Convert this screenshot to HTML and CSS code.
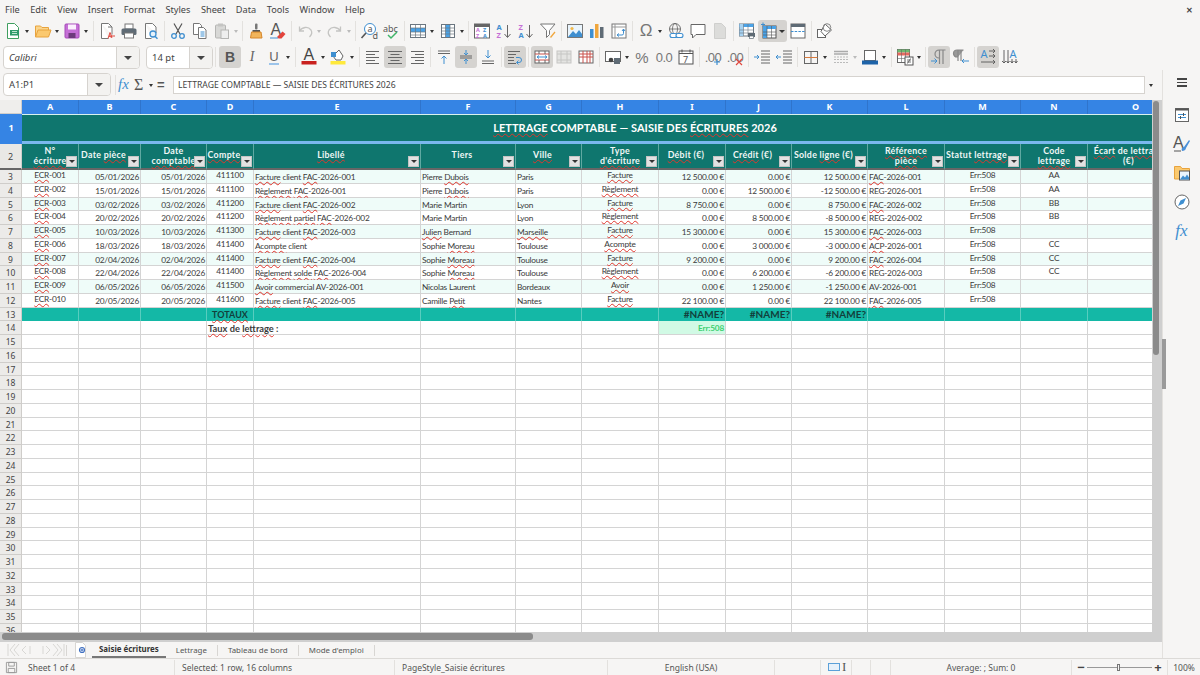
FILE: index.html
```html
<!DOCTYPE html>
<html lang="fr">
<head>
<meta charset="utf-8">
<title>Lettrage comptable</title>
<link rel="stylesheet" href="styles.css">
</head>
<body>
<nav class="menu">
<span>File</span><span>Edit</span><span>View</span><span>Insert</span><span>Format</span><span>Styles</span><span>Sheet</span><span>Data</span><span>Tools</span><span>Window</span><span>Help</span>
<span class="close">✕</span>
</nav>

<div class="tb tb1">
<div class="ic"><svg viewBox="0 0 18 18"><path d="M3.500 1.500h7l4 4v11h-11z" fill="#fff" stroke="#3f9f5f"/><rect x="6" y="8" width="9" height="5.500" fill="#2f9a6a"/><path d="M8 9.500h5M8 11.500h5" stroke="#bfe6d0"/></svg></div><div class="ar"></div>
<div class="ic"><svg viewBox="0 0 18 18"><path d="M1.500 15V4h5l1.500 1.500h6.500V8" fill="#fbd58c" stroke="#e8a33d"/><path d="M1.500 15l2.500-7h13l-2.500 7z" fill="#fbc96f" stroke="#e8a33d"/></svg></div><div class="ar"></div>
<div class="ic"><svg viewBox="0 0 18 18"><rect x="2" y="2" width="14" height="14" rx="1" fill="#c56fd6" stroke="#a64bb8"/><rect x="5" y="2.500" width="8" height="5" fill="#fbeffd"/><rect x="5.500" y="11" width="7" height="5" fill="#6e3a7c"/></svg></div><div class="ar"></div>
<div class="sep"></div>
<div class="ic"><svg viewBox="0 0 18 18"><path d="M3.500 1.500h7l3.500 3.500v7.500M3.500 1.500v15h7" fill="#fff" stroke="#777"/><path d="M10 5h4" stroke="#777"/><path d="M10 16.500l2-6 2 5-3-1.500h6" fill="none" stroke="#e0483e"/></svg></div>
<div class="ic"><svg viewBox="0 0 18 18"><rect x="5" y="2" width="8" height="5" fill="#fff" stroke="#777"/><rect x="1.500" y="6.500" width="15" height="6.500" rx="1.500" fill="#5f6b75"/><rect x="4.500" y="11" width="9" height="5" fill="#fff" stroke="#777"/></svg></div>
<div class="ic"><svg viewBox="0 0 18 18"><path d="M3.500 1.500h7l3.500 3.500v6M3.500 1.500v15h6" fill="#fff" stroke="#777"/><circle cx="11" cy="12" r="3" fill="#e6f2fb" stroke="#3f8fd0" stroke-width="1.300"/><path d="M13 14.200l2.500 2.500" stroke="#3f8fd0" stroke-width="1.500"/></svg></div>
<div class="sep"></div>
<div class="ic"><svg viewBox="0 0 18 18"><path d="M5 1.500l6 10.500M13 1.500L7 12" stroke="#555" stroke-width="1.200" fill="none"/><circle cx="5" cy="14" r="2.300" fill="none" stroke="#3f8fd0" stroke-width="1.300"/><circle cx="13" cy="14" r="2.300" fill="none" stroke="#3f8fd0" stroke-width="1.300"/></svg></div>
<div class="ic"><svg viewBox="0 0 18 18"><path d="M2.500 1.500h6l2 2v9h-8z" fill="#fff" stroke="#777"/><path d="M7.500 5.500h5l2.500 2.500v8.500h-7.500z" fill="#fff" stroke="#777"/><path d="M9.500 10h4M9.500 12h4M9.500 14h4" stroke="#3f8fd0"/></svg></div>
<div class="ic"><svg viewBox="0 0 18 18"><rect x="2.500" y="3" width="10" height="13" rx="1" fill="#d8d8d6" stroke="#b5b5b3"/><rect x="5" y="1.500" width="5" height="3" fill="#c4c4c2"/><rect x="8" y="8" width="7.500" height="8.500" fill="#eee" stroke="#b5b5b3"/></svg></div><div class="ar dis"></div>
<div class="sep"></div>
<div class="ic"><svg viewBox="0 0 18 18"><rect x="8" y="1.500" width="2.500" height="6" rx="1" fill="#777"/><path d="M5.500 8h7.500v2h-7.500z" fill="#555"/><path d="M4.500 10h9.500l1 6h-11.500z" fill="#f1b45b" stroke="#d6862a"/></svg></div>
<div class="ic"><svg viewBox="0 0 18 18"><text x="1.500" y="12.500" class="svt" fill="#555">A</text><path d="M8 15l5.500-5.500 3 2.500-4 4.500h-3z" fill="#e2443c"/><path d="M1 16h8" stroke="#3f8fd0"/></svg></div>
<div class="sep"></div>
<div class="ic"><svg viewBox="0 0 18 18"><path d="M3.500 4.500v4.500h4.500M3.500 9C6 5 12 4 15 8c1.500 2.500.5 5-1.500 7" fill="none" stroke="#c4c4c2" stroke-width="1.300"/></svg></div><div class="ar dis"></div>
<div class="ic"><svg viewBox="0 0 18 18"><path d="M14.500 4.500v4.500h-4.500M14.500 9C12 5 6 4 3 8c-1.500 2.500-.5 5 1.500 7" fill="none" stroke="#c4c4c2" stroke-width="1.300"/></svg></div><div class="ar dis"></div>
<div class="sep"></div>
<div class="ic"><svg viewBox="0 0 18 18"><circle cx="10" cy="7" r="5.500" fill="#fff" stroke="#3f8fd0"/><text x="7.500" y="9.500" class="svs" fill="#555">a</text><path d="M6 11l-4.500 5" stroke="#555" stroke-width="1.600"/><text x="12.500" y="16.500" class="svs" fill="#555">d</text></svg></div>
<div class="ic"><svg viewBox="0 0 18 18"><text x="1" y="9.500" class="svs" fill="#555">abc</text><path d="M6 13l3 3 6-6" fill="none" stroke="#3fb56a" stroke-width="1.500"/></svg></div>
<div class="sep"></div>
<div class="ic"><svg viewBox="0 0 18 18"><rect x="1.500" y="2.500" width="15" height="13" fill="#fff" stroke="#6b7680"/><rect x="2" y="6" width="14" height="4" fill="#4aa3e8"/><path d="M1.500 6h15M1.500 10h15M1.500 13h15M6.500 2.500v13M11.500 2.500v13" stroke="#6b7680" stroke-width=".7"/></svg></div><div class="ar"></div>
<div class="ic"><svg viewBox="0 0 18 18"><rect x="2.500" y="2.500" width="13" height="13" fill="#fff" stroke="#6b7680"/><rect x="6.500" y="3" width="4.500" height="12" fill="#4aa3e8"/><path d="M2.500 6h13M2.500 9h13M2.500 12h13M6.500 2.500v13M11 2.500v13" stroke="#6b7680" stroke-width=".7"/></svg></div><div class="ar"></div>
<div class="sep"></div>
<div class="ic"><svg viewBox="0 0 18 18"><rect x="1.500" y="2" width="15" height="14" fill="#fff" stroke="#666"/><rect x="1.500" y="2" width="15" height="3" fill="#666"/><text x="3" y="10" class="svxs" fill="#c66fd6">A</text><text x="3" y="15.500" class="svxs" fill="#c66fd6">Z</text><text x="10" y="10" class="svxs" fill="#3f8fd0">Z</text><text x="10" y="15.500" class="svxs" fill="#3f8fd0">A</text></svg></div>
<div class="ic"><svg viewBox="0 0 18 18"><text x="1.500" y="8" class="svx" fill="#3f8fd0">A</text><text x="1.500" y="16" class="svx" fill="#c66fd6">Z</text><path d="M12.500 3v12M9.500 12l3 3.500 3-3.500" fill="none" stroke="#666"/></svg></div>
<div class="ic"><svg viewBox="0 0 18 18"><text x="1.500" y="8" class="svx" fill="#c66fd6">Z</text><text x="1.500" y="16" class="svx" fill="#3f8fd0">A</text><path d="M12.500 3v12M9.500 12l3 3.500 3-3.500" fill="none" stroke="#666"/></svg></div>
<div class="ic"><svg viewBox="0 0 18 18"><path d="M1.500 2h14.500l-5.500 6.500v4l-3 3v-7z" fill="#fff" stroke="#777"/><path d="M11 15l4.500-5.500 1 1-4.500 5.500z" fill="#f0a63c"/></svg></div>
<div class="sep"></div>
<div class="ic"><svg viewBox="0 0 18 18"><rect x="1.500" y="2.500" width="15" height="13" fill="#eaf5fd" stroke="#777"/><circle cx="6" cy="6.500" r="1.600" fill="#f2b84b"/><path d="M2 15l5-6 3 3 3-4 3 4v3z" fill="#3f8fd0"/></svg></div>
<div class="ic"><svg viewBox="0 0 18 18"><rect x="2" y="7" width="3.500" height="9" fill="#3f8fd0"/><rect x="7" y="2" width="3.500" height="14" fill="#f0a63c"/><rect x="12" y="5" width="3.500" height="11" fill="#5f6b75"/></svg></div>
<div class="ic"><svg viewBox="0 0 18 18"><rect x="2" y="2" width="14" height="14" fill="#fff" stroke="#777"/><path d="M2 5h14M5 2v14" stroke="#999"/><path d="M7 13h5a1.500 1.500 0 0 0 1.500-1.500V7M12 9l1.500-2 1.500 2M9 11.500L7 13l2 1.500" fill="none" stroke="#3f8fd0"/></svg></div>
<div class="sep"></div>
<div class="ic"><span class="om">Ω</span></div><div class="ar"></div>
<div class="ic"><svg viewBox="0 0 18 18"><circle cx="8" cy="7" r="5.500" fill="none" stroke="#666" stroke-width=".9"/><ellipse cx="8" cy="7" rx="2.500" ry="5.500" fill="none" stroke="#666" stroke-width=".8"/><path d="M2.500 7h11" stroke="#666" stroke-width=".8"/><rect x="3" y="11.500" width="7" height="4" rx="2" fill="#fff" stroke="#3f8fd0" stroke-width="1.100"/><rect x="9" y="11.500" width="7" height="4" rx="2" fill="#fff" stroke="#3f8fd0" stroke-width="1.100"/></svg></div>
<div class="ic"><svg viewBox="0 0 18 18"><path d="M2 2.500h14v10h-9l-3.500 3.500v-3.500h-1.500z" fill="#fff" stroke="#666"/></svg></div>
<div class="ic"><svg viewBox="0 0 18 18"><path d="M3.500 1.500h7l4 4v11h-11z" fill="#dcdcda" stroke="#cfcfcd"/></svg></div>
<div class="sep"></div>
<div class="ic"><svg viewBox="0 0 18 18"><rect x="1.500" y="2" width="14" height="12" fill="#fff" stroke="#6b7680"/><rect x="1.500" y="2" width="14" height="3" fill="#4aa3e8"/><rect x="1.500" y="2" width="4" height="12" fill="#a6d2f2"/><path d="M1.500 8h14M1.500 11h14M5.500 2v12M10 2v12" stroke="#6b7680" stroke-width=".6"/><rect x="10" y="11" width="7" height="4" fill="#5f6b75"/><rect x="11.500" y="14" width="4" height="2.500" fill="#fff" stroke="#5f6b75" stroke-width=".7"/></svg></div>
<div class="ic on w29"><svg viewBox="0 0 18 18"><rect x="3" y="4" width="13" height="12" fill="#fff" stroke="#555"/><rect x="3" y="4" width="13" height="3" fill="#4aa3e8"/><rect x="3" y="4" width="4" height="12" fill="#4aa3e8"/><path d="M3 10h13M3 13h13M7 4v12M11.500 4v12" stroke="#555" stroke-width=".6"/><path d="M1 2.500h4M3 .5v4" stroke="#3f8fd0"/></svg><i class="ari"></i></div>
<div class="ic"><svg viewBox="0 0 18 18"><rect x="2" y="2" width="14" height="14" fill="#fff" stroke="#666"/><rect x="2" y="2" width="14" height="3" fill="#5f6b75"/><path d="M2 9.500h14" stroke="#3f8fd0" stroke-dasharray="2.500 1.200"/></svg></div>
<div class="sep"></div>
<div class="ic"><svg viewBox="0 0 18 18"><rect x="1.500" y="7.500" width="8" height="8" fill="#fff" stroke="#666"/><path d="M9 2l6.500 6-6.500 6-4-4.500z" fill="#fff" stroke="#666"/><circle cx="11" cy="5.500" r="3.800" fill="none" stroke="#888"/></svg></div>
</div>

<div class="tb tb2">
<div class="combo cfont"><span class="cv it">Calibri</span><span class="cb"></span></div>
<div class="combo csize"><span class="cv">14 pt</span><span class="cb"></span></div>
<div class="sep s1"></div>
<div class="ic on"><b class="fb">B</b></div>
<div class="ic"><span class="fi">I</span></div>
<div class="ic"><span class="fu">U</span></div><div class="ar"></div>
<div class="sep"></div>
<div class="ic"><svg viewBox="0 0 18 18"><text x="3.500" y="11.500" class="svt" fill="#444">A</text><rect x="1.500" y="13" width="15" height="3.500" fill="#c9211e"/></svg></div><div class="ar"></div>
<div class="ic"><svg viewBox="0 0 18 18"><rect x="1.500" y="13" width="15" height="3.500" fill="#ffe93b"/><path d="M7 12l-3-4 6-6 4 6-2 4z" fill="#fff" stroke="#666"/><rect x="2" y="4" width="5" height="5" fill="#3f8fd0"/></svg></div><div class="ar"></div>
<div class="sep"></div>
<div class="ic"><svg viewBox="0 0 18 18"><path d="M2 3.500h13M2 6.500h9M2 9.500h13M2 12.500h9M2 15.500h13" stroke="#666"/></svg></div>
<div class="ic on"><svg viewBox="0 0 18 18"><path d="M2 3.500h14M4.500 6.500h9M2 9.500h14M4.500 12.500h9M2 15.500h14" stroke="#666"/></svg></div>
<div class="ic"><svg viewBox="0 0 18 18"><path d="M3 3.500h13M7 6.500h9M3 9.500h13M7 12.500h9M3 15.500h13" stroke="#666"/></svg></div>
<div class="sep"></div>
<div class="ic"><svg viewBox="0 0 18 18"><path d="M3 3h12M3 5.500h12" stroke="#666"/><path d="M9 16V8M6.500 10.500L9 8l2.500 2.500" fill="none" stroke="#3f8fd0"/></svg></div>
<div class="ic on"><svg viewBox="0 0 18 18"><path d="M3 8h12M3 10h12" stroke="#666"/><path d="M9 2v5M7 5l2 2 2-2M9 16v-5M7 13l2-2 2 2" fill="none" stroke="#3f8fd0"/></svg></div>
<div class="ic"><svg viewBox="0 0 18 18"><path d="M3 13h12M3 15.500h12" stroke="#666"/><path d="M9 2v8M6.500 7.500L9 10l2.500-2.500" fill="none" stroke="#3f8fd0"/></svg></div>
<div class="sep"></div>
<div class="ic on"><svg viewBox="0 0 18 18"><path d="M2 3.500h12M2 6.500h8M2 9.500h6M2 12.500h6M2 15.500h8" stroke="#666"/><path d="M10 9.500h3a2.500 2.500 0 0 1 0 5h-2M12.500 12.500l-2 2 2 2" fill="none" stroke="#3f8fd0"/></svg></div>
<div class="sep"></div>
<div class="ic on"><svg viewBox="0 0 18 18"><rect x="2" y="3" width="14" height="12" fill="#fff" stroke="#666"/><path d="M2 6h14M2 12h14" stroke="#c9504a"/><path d="M6 3v3M12 3v3M6 12v3M12 12v3" stroke="#666"/><path d="M4 9h10M4 9l2-1.500M4 9l2 1.500M14 9l-2-1.500M14 9l-2 1.500" fill="none" stroke="#3f8fd0"/></svg></div>
<div class="ic"><svg viewBox="0 0 18 18"><rect x="2" y="3" width="14" height="12" fill="#e4e4e2" stroke="#c6c6c4"/><path d="M2 6h14M2 12h14M6 3v12M12 3v12" stroke="#c6c6c4"/></svg></div>
<div class="ic"><svg viewBox="0 0 18 18"><rect x="2" y="3" width="14" height="12" fill="#fff" stroke="#666"/><path d="M2 6h14M2 9h14M6 3v12M10 3v12M13 3v12" stroke="#c9504a"/></svg></div>
<div class="sep"></div>
<div class="ic"><svg viewBox="0 0 18 18"><rect x="1.500" y="3.500" width="15" height="10" fill="#fff" stroke="#666"/><circle cx="7" cy="12" r="2.300" fill="#444"/><rect x="10" y="10" width="6" height="6" fill="#5f6b75"/></svg></div><div class="ar"></div>
<div class="ic"><span class="gl">%</span></div>
<div class="ic"><span class="gl sm">0.0</span></div>
<div class="ic"><svg viewBox="0 0 18 18"><rect x="2" y="3" width="14" height="13" fill="#fff" stroke="#555"/><path d="M2 5.500h14" stroke="#555"/><path d="M5 1.500v3M13 1.500v3" stroke="#555"/><text x="6" y="14.500" class="svs" fill="#555">7</text></svg></div>
<div class="sep"></div>
<div class="ic"><span class="gl sm">.00</span><svg class="ov" viewBox="0 0 18 18"><path d="M13 11v6M10 14h6" stroke="#3f8fd0" stroke-width="1.200"/></svg></div>
<div class="ic"><span class="gl sm">.00</span><svg class="ov" viewBox="0 0 18 18"><path d="M10 11l6 6M16 11l-6 6" stroke="#e0483e" stroke-width="1.200"/></svg></div>
<div class="sep"></div>
<div class="ic"><svg viewBox="0 0 18 18"><path d="M8 3h9M8 6h9M8 9h9M8 12h9M8 15h9" stroke="#666"/><path d="M1 9h5M4 7l2 2-2 2" fill="none" stroke="#3f8fd0"/></svg></div>
<div class="ic"><svg viewBox="0 0 18 18"><path d="M8 3h9M8 6h9M8 9h9M8 12h9M8 15h9" stroke="#666"/><path d="M6 9H1M3 7L1 9l2 2" fill="none" stroke="#3f8fd0"/></svg></div>
<div class="sep"></div>
<div class="ic"><svg viewBox="0 0 18 18"><rect x="2.500" y="3.500" width="13" height="12" fill="none" stroke="#666"/><path d="M9 3.500v12" stroke="#666"/><path d="M2.500 9.500h13" stroke="#d97a3c"/></svg></div><div class="ar"></div>
<div class="ic"><svg viewBox="0 0 18 18"><path d="M2 3.500h14M2 6h14" stroke="#aaa" stroke-width="1.400"/><path d="M2 9h14M2 11.500h14M2 14.500h14" stroke="#bbb" stroke-dasharray="2 1"/></svg></div><div class="ar dis"></div>
<div class="ic"><svg viewBox="0 0 18 18"><rect x="3.500" y="2.500" width="11" height="10" fill="#fff" stroke="#666"/><rect x="1" y="12.500" width="16" height="4" fill="#1e63a8"/></svg></div><div class="ar"></div>
<div class="sep"></div>
<div class="ic"><svg viewBox="0 0 18 18"><rect x="1.500" y="1.500" width="12" height="13" fill="#fff" stroke="#666"/><rect x="1.500" y="1.500" width="12" height="3" fill="#6ebb6e"/><rect x="1.500" y="4.500" width="12" height="3" fill="#e86a60"/><path d="M1.500 10.500h12M5.500 1.500v13M9.500 1.500v13" stroke="#666" stroke-width=".6"/><rect x="9" y="9" width="8" height="8" fill="#fff" stroke="#555"/><path d="M11 12h4M11 14h4M14.500 10.500l-3 5" stroke="#555" stroke-width=".8"/></svg></div><div class="ar"></div>
<div class="sep"></div>
<div class="ic on"><svg viewBox="0 0 18 18"><path d="M9.500 2v14M13 2v14M15.500 2H9a4 4 0 0 0 0 8h1" fill="none" stroke="#888" stroke-width="1.200"/><path d="M1 13h6M4.500 10.500L7 13l-2.500 2.500" fill="none" stroke="#3f8fd0"/></svg></div>
<div class="ic"><svg viewBox="0 0 18 18"><path d="M6 2v11M9 2v11M11.500 2H5a3.500 3.500 0 0 0 0 7h1" fill="#999" stroke="#888" stroke-width="1.200"/><path d="M10 13h7M12 11l-2 2 2 2" fill="none" stroke="#3f8fd0"/></svg></div>
<div class="sep"></div>
<div class="ic on"><svg viewBox="0 0 18 18"><text x="1.500" y="10" class="svm" fill="#3f8fd0">A</text><path d="M10 3h6M14 1l2 2-2 2M10 8h6M14 6l2 2-2 2M2 14h14M14 12l2 2-2 2" fill="none" stroke="#555" stroke-width=".9"/></svg></div>
<div class="ic"><svg viewBox="0 0 18 18"><text x="8.500" y="10" class="svm" fill="#3f8fd0">A</text><path d="M3 2v13M1 13l2 2 2-2M7 2v13M5.500 13L7 15l1.500-2M11 11v4M9.500 13l1.500 2 1.500-2M15 11v4M13.500 13l1.500 2 1.500-2" fill="none" stroke="#555" stroke-width=".9"/></svg></div>
</div>

<div class="work">
<div class="left">
<div class="fbar">
<div class="combo cname"><span class="cv">A1:P1</span><span class="cb"></span></div>
<div class="sep s2"></div>
<span class="fx">fx</span>
<span class="sig">Σ</span><div class="ar a2"></div>
<span class="eq">=</span>
<div class="finput">LETTRAGE COMPTABLE — SAISIE DES ÉCRITURES 2026</div>
<div class="ar a3"></div>
</div>
<div class="sheetwrap">
<div class="clip">
<div class="g">
<b class="ch0"></b><b class="ch">A</b><b class="ch">B</b><b class="ch">C</b><b class="ch">D</b><b class="ch">E</b><b class="ch">F</b><b class="ch">G</b><b class="ch">H</b><b class="ch">I</b><b class="ch">J</b><b class="ch">K</b><b class="ch">L</b><b class="ch">M</b><b class="ch">N</b><b class="ch">O</b><b class="ch">P</b>

<b class="rh rsel">1</b>
<div class="title"><span><u>LETTRAGE</u> COMPTABLE — SAISIE DES <u>ÉCRITURES</u> 2026</span></div>

<b class="rh r2">2</b>
<div class="h"><span>N°<br><u>écriture</u></span><em></em></div>
<div class="h t"><span>Date <u>pièce</u></span><em></em></div>
<div class="h"><span>Date<br><u>comptable</u></span><em></em></div>
<div class="h t"><span><u>Compte</u></span><em></em></div>
<div class="h t"><span><u>Libellé</u></span><em></em></div>
<div class="h t"><span>Tiers</span><em></em></div>
<div class="h t"><span><u>Ville</u></span><em></em></div>
<div class="h"><span>Type<br><u>d'écriture</u></span><em></em></div>
<div class="h t"><span><u>Débit</u> (€)</span><em></em></div>
<div class="h t"><span><u>Crédit</u> (€)</span><em></em></div>
<div class="h t"><span>Solde <u>ligne</u> (€)</span><em></em></div>
<div class="h"><span><u>Référence</u><br><u>pièce</u></span><em></em></div>
<div class="h t"><span>Statut <u>lettrage</u></span><em></em></div>
<div class="h"><span>Code<br><u>lettrage</u></span><em></em></div>
<div class="h ho"><span><u>Écart</u> de <u>lettrage</u><br>(€)</span><em></em></div>
<div class="h"></div>

<b class="rh">3</b><div class="c a m"><u>ECR</u>-001</div><div class="c a r">05/01/2026</div><div class="c a r">05/01/2026</div><div class="c a m">411100</div><div class="c a"><u>Facture</u> client <u>FAC</u>-2026-001</div><div class="c a">Pierre <u>Dubois</u></div><div class="c a">Paris</div><div class="c a m"><u>Facture</u></div><div class="c a r">12 500.00 €</div><div class="c a r">0.00 €</div><div class="c a r">12 500.00 €</div><div class="c a"><u>FAC</u>-2026-001</div><div class="c a m">Err:508</div><div class="c a m">AA</div><div class="c a"></div><div class="c a"></div>
<b class="rh">4</b><div class="c m"><u>ECR</u>-002</div><div class="c r">15/01/2026</div><div class="c r">15/01/2026</div><div class="c m">411100</div><div class="c"><u>Règlement</u> <u>FAC</u>-2026-001</div><div class="c">Pierre <u>Dubois</u></div><div class="c">Paris</div><div class="c m"><u>Règlement</u></div><div class="c r">0.00 €</div><div class="c r">12 500.00 €</div><div class="c r">-12 500.00 €</div><div class="c">REG-2026-001</div><div class="c m">Err:508</div><div class="c m">AA</div><div class="c"></div><div class="c"></div>
<b class="rh">5</b><div class="c a m"><u>ECR</u>-003</div><div class="c a r">03/02/2026</div><div class="c a r">03/02/2026</div><div class="c a m">411200</div><div class="c a"><u>Facture</u> client <u>FAC</u>-2026-002</div><div class="c a">Marie Martin</div><div class="c a">Lyon</div><div class="c a m"><u>Facture</u></div><div class="c a r">8 750.00 €</div><div class="c a r">0.00 €</div><div class="c a r">8 750.00 €</div><div class="c a"><u>FAC</u>-2026-002</div><div class="c a m">Err:508</div><div class="c a m">BB</div><div class="c a"></div><div class="c a"></div>
<b class="rh">6</b><div class="c m"><u>ECR</u>-004</div><div class="c r">20/02/2026</div><div class="c r">20/02/2026</div><div class="c m">411200</div><div class="c"><u>Règlement</u> <u>partiel</u> <u>FAC</u>-2026-002</div><div class="c">Marie Martin</div><div class="c">Lyon</div><div class="c m"><u>Règlement</u></div><div class="c r">0.00 €</div><div class="c r">8 500.00 €</div><div class="c r">-8 500.00 €</div><div class="c">REG-2026-002</div><div class="c m">Err:508</div><div class="c m">BB</div><div class="c"></div><div class="c"></div>
<b class="rh">7</b><div class="c a m"><u>ECR</u>-005</div><div class="c a r">10/03/2026</div><div class="c a r">10/03/2026</div><div class="c a m">411300</div><div class="c a"><u>Facture</u> client <u>FAC</u>-2026-003</div><div class="c a"><u>Julien</u> Bernard</div><div class="c a"><u>Marseille</u></div><div class="c a m"><u>Facture</u></div><div class="c a r">15 300.00 €</div><div class="c a r">0.00 €</div><div class="c a r">15 300.00 €</div><div class="c a"><u>FAC</u>-2026-003</div><div class="c a m">Err:508</div><div class="c a m"></div><div class="c a"></div><div class="c a"></div>
<b class="rh">8</b><div class="c m"><u>ECR</u>-006</div><div class="c r">18/03/2026</div><div class="c r">18/03/2026</div><div class="c m">411400</div><div class="c"><u>Acompte</u> client</div><div class="c">Sophie <u>Moreau</u></div><div class="c">Toulouse</div><div class="c m"><u>Acompte</u></div><div class="c r">0.00 €</div><div class="c r">3 000.00 €</div><div class="c r">-3 000.00 €</div><div class="c"><u>ACP</u>-2026-001</div><div class="c m">Err:508</div><div class="c m">CC</div><div class="c"></div><div class="c"></div>
<b class="rh">9</b><div class="c a m"><u>ECR</u>-007</div><div class="c a r">02/04/2026</div><div class="c a r">02/04/2026</div><div class="c a m">411400</div><div class="c a"><u>Facture</u> client <u>FAC</u>-2026-004</div><div class="c a">Sophie <u>Moreau</u></div><div class="c a">Toulouse</div><div class="c a m"><u>Facture</u></div><div class="c a r">9 200.00 €</div><div class="c a r">0.00 €</div><div class="c a r">9 200.00 €</div><div class="c a"><u>FAC</u>-2026-004</div><div class="c a m">Err:508</div><div class="c a m">CC</div><div class="c a"></div><div class="c a"></div>
<b class="rh">10</b><div class="c m"><u>ECR</u>-008</div><div class="c r">22/04/2026</div><div class="c r">22/04/2026</div><div class="c m">411400</div><div class="c"><u>Règlement</u> <u>solde</u> <u>FAC</u>-2026-004</div><div class="c">Sophie <u>Moreau</u></div><div class="c">Toulouse</div><div class="c m"><u>Règlement</u></div><div class="c r">0.00 €</div><div class="c r">6 200.00 €</div><div class="c r">-6 200.00 €</div><div class="c">REG-2026-003</div><div class="c m">Err:508</div><div class="c m">CC</div><div class="c"></div><div class="c"></div>
<b class="rh">11</b><div class="c a m"><u>ECR</u>-009</div><div class="c a r">06/05/2026</div><div class="c a r">06/05/2026</div><div class="c a m">411500</div><div class="c a"><u>Avoir</u> commercial AV-2026-001</div><div class="c a">Nicolas Laurent</div><div class="c a">Bordeaux</div><div class="c a m"><u>Avoir</u></div><div class="c a r">0.00 €</div><div class="c a r">1 250.00 €</div><div class="c a r">-1 250.00 €</div><div class="c a">AV-2026-001</div><div class="c a m">Err:508</div><div class="c a m"></div><div class="c a"></div><div class="c a"></div>
<b class="rh">12</b><div class="c m"><u>ECR</u>-010</div><div class="c r">20/05/2026</div><div class="c r">20/05/2026</div><div class="c m">411600</div><div class="c"><u>Facture</u> client <u>FAC</u>-2026-005</div><div class="c">Camille <u>Petit</u></div><div class="c">Nantes</div><div class="c m"><u>Facture</u></div><div class="c r">22 100.00 €</div><div class="c r">0.00 €</div><div class="c r">22 100.00 €</div><div class="c"><u>FAC</u>-2026-005</div><div class="c m">Err:508</div><div class="c m"></div><div class="c"></div><div class="c"></div>

<b class="rh">13</b><div class="tot"></div><div class="tot"></div><div class="tot"></div><div class="tot tl"><u>TOTAUX</u></div><div class="tot"></div><div class="tot"></div><div class="tot"></div><div class="tot"></div><div class="tot r">#NAME?</div><div class="tot r">#NAME?</div><div class="tot r">#NAME?</div><div class="tot"></div><div class="tot"></div><div class="tot"></div><div class="tot"></div><div class="tot"></div>
<b class="rh">14</b><i></i><i></i><i></i><div class="c taux"><u>Taux</u> de <u>lettrage</u> :</div><i></i><i></i><i></i><i></i><div class="c r err">Err:508</div><i></i><i></i><i></i><i></i><i></i><i></i><i></i>
<b class="rh">15</b><i></i><i></i><i></i><i></i><i></i><i></i><i></i><i></i><i></i><i></i><i></i><i></i><i></i><i></i><i></i><i></i>
<b class="rh">16</b><i></i><i></i><i></i><i></i><i></i><i></i><i></i><i></i><i></i><i></i><i></i><i></i><i></i><i></i><i></i><i></i>
<b class="rh">17</b><i></i><i></i><i></i><i></i><i></i><i></i><i></i><i></i><i></i><i></i><i></i><i></i><i></i><i></i><i></i><i></i>
<b class="rh">18</b><i></i><i></i><i></i><i></i><i></i><i></i><i></i><i></i><i></i><i></i><i></i><i></i><i></i><i></i><i></i><i></i>
<b class="rh">19</b><i></i><i></i><i></i><i></i><i></i><i></i><i></i><i></i><i></i><i></i><i></i><i></i><i></i><i></i><i></i><i></i>
<b class="rh">20</b><i></i><i></i><i></i><i></i><i></i><i></i><i></i><i></i><i></i><i></i><i></i><i></i><i></i><i></i><i></i><i></i>
<b class="rh">21</b><i></i><i></i><i></i><i></i><i></i><i></i><i></i><i></i><i></i><i></i><i></i><i></i><i></i><i></i><i></i><i></i>
<b class="rh">22</b><i></i><i></i><i></i><i></i><i></i><i></i><i></i><i></i><i></i><i></i><i></i><i></i><i></i><i></i><i></i><i></i>
<b class="rh">23</b><i></i><i></i><i></i><i></i><i></i><i></i><i></i><i></i><i></i><i></i><i></i><i></i><i></i><i></i><i></i><i></i>
<b class="rh">24</b><i></i><i></i><i></i><i></i><i></i><i></i><i></i><i></i><i></i><i></i><i></i><i></i><i></i><i></i><i></i><i></i>
<b class="rh">25</b><i></i><i></i><i></i><i></i><i></i><i></i><i></i><i></i><i></i><i></i><i></i><i></i><i></i><i></i><i></i><i></i>
<b class="rh">26</b><i></i><i></i><i></i><i></i><i></i><i></i><i></i><i></i><i></i><i></i><i></i><i></i><i></i><i></i><i></i><i></i>
<b class="rh">27</b><i></i><i></i><i></i><i></i><i></i><i></i><i></i><i></i><i></i><i></i><i></i><i></i><i></i><i></i><i></i><i></i>
<b class="rh">28</b><i></i><i></i><i></i><i></i><i></i><i></i><i></i><i></i><i></i><i></i><i></i><i></i><i></i><i></i><i></i><i></i>
<b class="rh">29</b><i></i><i></i><i></i><i></i><i></i><i></i><i></i><i></i><i></i><i></i><i></i><i></i><i></i><i></i><i></i><i></i>
<b class="rh">30</b><i></i><i></i><i></i><i></i><i></i><i></i><i></i><i></i><i></i><i></i><i></i><i></i><i></i><i></i><i></i><i></i>
<b class="rh">31</b><i></i><i></i><i></i><i></i><i></i><i></i><i></i><i></i><i></i><i></i><i></i><i></i><i></i><i></i><i></i><i></i>
<b class="rh">32</b><i></i><i></i><i></i><i></i><i></i><i></i><i></i><i></i><i></i><i></i><i></i><i></i><i></i><i></i><i></i><i></i>
<b class="rh">33</b><i></i><i></i><i></i><i></i><i></i><i></i><i></i><i></i><i></i><i></i><i></i><i></i><i></i><i></i><i></i><i></i>
<b class="rh">34</b><i></i><i></i><i></i><i></i><i></i><i></i><i></i><i></i><i></i><i></i><i></i><i></i><i></i><i></i><i></i><i></i>
<b class="rh">35</b><i></i><i></i><i></i><i></i><i></i><i></i><i></i><i></i><i></i><i></i><i></i><i></i><i></i><i></i><i></i><i></i>
<b class="rh">36</b><i></i><i></i><i></i><i></i><i></i><i></i><i></i><i></i><i></i><i></i><i></i><i></i><i></i><i></i><i></i><i></i>
</div>
</div>
<div class="vs"><div class="vthumb"></div></div>
</div>
<div class="hs"><div class="hthumb"></div></div>
<div class="tabs">
<div class="nav"><svg viewBox="0 0 60 14"><path d="M2 1v12M9 1L4 7l5 6M13 1L8 7l5 6M20 3l-4 4 4 4M24 3v8M37 3v8M40 3l4 4-4 4M47 1l5 6-5 6M51 1l5 6-5 6M58 1v12" fill="none" stroke="#d8d7d4"/></svg></div>
<div class="tsep"></div>
<div class="newt"><svg viewBox="0 0 14 16"><path d="M1.500 .5h7l3 3v12h-10z" fill="#fff" stroke="#d8d6d3"/><circle cx="8" cy="8" r="2.500" fill="#fff" stroke="#3f6fc0" stroke-width="1.200"/><path d="M8 6.500v3M6.500 8h3" stroke="#3f6fc0"/></svg></div>
<span class="tab cur">Saisie écritures</span>
<span class="tab">Lettrage</span><div class="tsep"></div>
<span class="tab">Tableau de bord</span><div class="tsep"></div>
<span class="tab">Mode d'emploi</span><div class="tsep"></div>
</div>
</div>
<aside class="side">
<div class="sh"><span></span><span></span><span></span></div>
<svg class="si" viewBox="0 0 18 18"><rect x="2.500" y="2.500" width="13" height="13" fill="#fff" stroke="#666"/><rect x="2.500" y="2.500" width="13" height="2" fill="#555"/><path d="M5 8.500h8M5 11.500h8" stroke="#3f8fd0"/><path d="M10.500 7v3M7.500 10v3" stroke="#555"/></svg>
<svg class="si" viewBox="0 0 18 18"><text x="0" y="13" class="svl" fill="#555">A</text><path d="M1 16h7" stroke="#555"/><path d="M9 16c-1-2 0-4 2-4l5-7 1 1-4 7c0 2-2 3-4 3z" fill="#4a90d9"/></svg>
<svg class="si" viewBox="0 0 18 18"><path d="M1.500 15V2.500h6l1.500 2h7.500v10.500z" fill="#fbc96f" stroke="#e8a33d"/><rect x="6.500" y="7" width="10" height="9" fill="#eaf5fd" stroke="#555"/><path d="M7 15.500l3-4 2 2 2-3 2 3v2z" fill="#3f8fd0"/></svg>
<svg class="si" viewBox="0 0 18 18"><circle cx="9" cy="9" r="7" fill="#fff" stroke="#666"/><path d="M13 5l-2.500 5.500L5 13l2.500-5.500z" fill="#3f8fd0"/></svg>
<span class="sfx">fx</span>
<div class="grip"></div>
</aside>
</div>

<footer class="status">
<div class="st s-a"><svg class="sv" viewBox="0 0 14 14"><path d="M1.500 1.500h11v11h-11z" fill="none" stroke="#999"/><path d="M4 1.500h6v4H4zM3.500 8h7v4.500h-7z" fill="none" stroke="#999"/></svg>Sheet 1 of 4</div>
<div class="st s-b">Selected: 1 row, 16 columns</div>
<div class="st s-c">PageStyle_Saisie écritures</div>
<div class="st s-d">English (USA)</div>
<div class="st s-e"></div>
<div class="st s-f"><span class="insbox"></span><span class="cursor">I</span></div>
<div class="st s-g"></div>
<div class="st s-g2"></div>
<div class="st s-h">Average: ; Sum: 0</div>
<div class="st s-i"><span class="zm">−</span><span class="zt"><span class="zk"></span></span><span class="zm">+</span></div>
<div class="st s-j">100%</div>
</footer>
</body>
</html>
```
FILE: styles.css
```css
*{box-sizing:border-box}
html,body{margin:0;padding:0;height:675px;width:1200px;overflow:hidden}
body{background:#f6f5f4;font-family:"Noto Sans",sans-serif;font-size:9px;color:#3d3d3d;display:flex;flex-direction:column}
svg{display:block;overflow:visible}
.menu{height:18px;display:flex;align-items:center;gap:10.500px;padding:0 5px;font-size:9.200px;color:#444;flex:none}
.close{margin-left:auto;font-size:8px;font-weight:700;margin-right:2px}
.tb{display:flex;align-items:center;padding-left:2px;flex:none}
.tb1{height:26px}
.tb2{height:26px;padding-left:3px}
.ic{width:22px;height:22px;display:flex;align-items:center;justify-content:center;position:relative;flex:none;border-radius:3px}
.ic svg{width:18px;height:18px}
.ic.on{background:#d5d3d0}
.w29{width:29px;justify-content:flex-start;padding-left:2px}
.ari{position:absolute;right:2px;top:10px;border:3px solid transparent;border-top-color:#333;border-bottom:0}
.ar{width:7.500px;height:22px;position:relative;flex:none}
.ar::after{content:"";position:absolute;left:1px;top:10px;border:2.500px solid transparent;border-top:3px solid #333;border-bottom:0}
.ar.dis::after{border-top-color:#bbb}
.sep{width:5px;height:22px;flex:none;position:relative}
.sep::after{content:"";position:absolute;left:2px;top:1px;bottom:1px;width:1px;background:#e3e1de}
.s1{width:6px}
.svt{font:16px "Liberation Sans",sans-serif}
.svs{font:9px "Noto Sans",sans-serif}
.svx{font:700 7.500px "Noto Sans",sans-serif}
.svxs{font:700 5.500px "Noto Sans",sans-serif}
.svm{font:11px "Noto Sans",sans-serif}
.svl{font:16px "Liberation Sans",sans-serif}
.om{font:17px/20px "Liberation Sans",sans-serif;color:#777}
.fb{font:700 14px "Liberation Sans",sans-serif;color:#555}
.fi{font:italic 14px "Liberation Serif",serif;color:#666}
.fu{font:13px "Liberation Sans",sans-serif;color:#666;border-bottom:2px solid #9cc4ea;line-height:13px}
.gl{font:15px "Liberation Sans",sans-serif;color:#777}
.gl.sm{font-size:13px;letter-spacing:-.5px}
.ov{position:absolute;left:2px;top:2px}
.combo{display:flex;height:23px;background:#fff;border:1px solid #d6d3cf;border-radius:4px;flex:none;overflow:hidden}
.cv{flex:1;padding-left:5px;font-size:9.500px;line-height:21px;color:#444}
.it{font-style:italic}
.cb{background:#f3f2f0;border-left:1px solid #d6d3cf;position:relative}
.cb::after{content:"";position:absolute;left:50%;top:9px;margin-left:-4px;border:4px solid transparent;border-top:4px solid #444;border-bottom:0}
.cfont{width:137px;margin-right:6px}
.cfont .cb{width:23px}
.csize{width:67px}
.csize .cb{width:23px}
.work{flex:1;display:flex;min-height:0}
.left{width:1162px;display:flex;flex-direction:column;flex:none}
.fbar{height:30px;display:flex;align-items:center;padding:1px 0 2px 3px;flex:none}
.cname{width:108px}
.cname .cb{width:23px}
.s2{margin-left:2px}
.fx,.sfx{font:italic 15px "Liberation Serif",serif;color:#3f8fd0}
.fx{width:15px}
.sig{font:16px "Liberation Serif",serif;color:#555;margin-left:1px;width:12px}
.a2{margin-left:2px;width:9px}
.eq{font:700 13px "Liberation Sans",sans-serif;color:#555;width:11px}
.finput{width:972px;height:18px;background:#fff;border:1px solid #d6d3cf;margin-left:5px;padding-left:4px;line-height:16px;font-size:8.600px;color:#444}
.a3{margin-left:3px}
.sheetwrap{flex:1;display:flex;min-height:0}
.clip{width:1152px;overflow:hidden;background:#fff}
.vs{width:10px;background:#cfcfcf;padding:1px 3px 0 1px}
.vthumb{height:254px;background:#8b8b8b;border-radius:3px}
.g{display:grid;width:1248px;grid-template-columns:22px 57px 62px 66px 47px 167px 95px 66px 77px 67px 66px 76px 77px 76px 67px 96px 64px;grid-template-rows:14px 30px 26px;grid-auto-rows:13.760px;font-family:Lato,sans-serif;font-size:8.300px;letter-spacing:-.22px;color:#3a3a3a}
.g b{font-weight:400}
.g i{border-right:1px solid #d4d4d4;border-bottom:1px solid #d4d4d4}
.ch0{background:#efeeec;border-right:1px solid #d0cecb;border-bottom:1px solid #d0cecb}
.g .ch{background:#3584e4;color:#fff;font:700 9px "Noto Sans",sans-serif;letter-spacing:0;text-align:center;line-height:14px;border-right:1px solid #2f74cc}
.rh{background:#ecebe9;border-right:1px solid #cfcdca;border-bottom:1px solid #cfcdca;text-align:center;font:8.500px "Noto Sans",sans-serif;letter-spacing:0;line-height:13px;color:#444}
.g .rsel{background:#3584e4;color:#fff;font:700 9px "Noto Sans",sans-serif;line-height:28px;border:0}
.g .r2{line-height:25px;background:#e9e8e5;border-bottom:2px solid #666;font-size:9px}
.title{grid-column:2 / span 16;background:#0f766e;color:#fff;font:700 11px Lato,sans-serif;text-align:center;line-height:25px;border-top:1px solid #d9f2ef;border-bottom:3px solid #7ab8ee;letter-spacing:.05px}
.h{background:#0f766e;color:#f1f7f6;font:700 8.800px/10px Lato,sans-serif;text-align:center;position:relative;padding-top:2px;border-right:1px solid #5fa9a2;border-bottom:2px solid #666;letter-spacing:.3px;white-space:nowrap}
.h.t{padding-top:6px;padding-right:12px}
.ho{padding-right:14px}
.h em{position:absolute;right:1px;bottom:1px;width:11px;height:11px;background:#e2e2e2;border:1px solid #c4c4c4}
.h em::after{content:"";position:absolute;left:1.500px;top:3px;border:3px solid transparent;border-top:3.500px solid #333;border-bottom:0}
.c{border-right:1px solid #d4d4d4;border-bottom:1px solid #d4d4d4;padding:1px 1px 0;white-space:nowrap;line-height:12.500px}
.a{background:#effcf9}
.r{text-align:right}
.m{text-align:center;padding-top:0;line-height:11.500px}
.tot{background:#14b8a6;border-right:1px solid #58cdbf;font:700 10px/13px Lato,sans-serif;letter-spacing:0;color:#123f3c;padding:0 1px;white-space:nowrap}
.tl{font-size:9px;text-align:center;padding:0}
.taux{font:700 9.300px/13px Lato,sans-serif;letter-spacing:0;padding-left:1px}
.err{background:#d1fae5;color:#3ecf71;font-weight:700}
u{text-decoration:underline wavy #e0362c .7px;text-decoration-skip-ink:none;text-underline-offset:1px}
.hs{height:10px;background:#cfcfcf;padding:1px 10px 0 2px;flex:none}
.hthumb{width:531px;height:7px;background:#8b8b8b;border-radius:3px}
.tabs{height:16px;display:flex;align-items:center;font-size:7.900px;flex:none;color:#555}
.nav{width:60px;margin-left:6px}
.nav svg{width:60px;height:14px}
.tsep{width:1px;height:11px;background:#d8d6d3;flex:none}
.newt{width:14px;margin:0 5px 0 7px}
.newt svg{width:14px;height:16px}
.tab{padding:0 10px;line-height:15px}
.tab.cur{font-weight:700;color:#333;padding:0 7px;border-bottom:2px solid #777;margin-left:-1px;height:16px}
.side{flex:1;border-left:1px solid #e3e1de;display:flex;flex-direction:column;align-items:center;position:relative;padding-top:8px}
.sh{display:flex;flex-direction:column;gap:2px;width:10px;margin-bottom:19px}
.sh span{height:1.500px;background:#444}
.si{width:18px;height:18px;margin-bottom:11px}
.sfx{font-size:17px;line-height:18px}
.grip{position:absolute;left:-1px;top:269px;width:4px;height:50px;background:#9a9a9a}
.status{height:17px;display:flex;align-items:center;font-size:8.500px;color:#555;flex:none;border-top:1px solid #dcdad7}
.st{height:15px;line-height:15px;border-right:1px solid #e3e1de;flex:none;white-space:nowrap}
.s-a{width:175px;display:flex;padding-left:5px;gap:10px;align-items:center}
.sv{width:13px;height:13px}
.s-b{width:220px;padding-left:7px}
.s-c{width:213px;padding-left:7px}
.s-d{width:167px;text-align:center}
.s-e{width:46px}
.s-f{width:31px;display:flex;align-items:center;padding-left:7px;gap:2px}
.insbox{width:12px;height:8px;background:#e7f1fa;border:1px solid #5ba0d8}
.cursor{font:13px "Liberation Serif",serif;color:#555}
.s-g{width:19px}
.s-g2{width:20px}
.s-h{width:181px;text-align:center}
.s-i{width:96px;display:flex;align-items:center;padding-left:5px;gap:2px}
.zm{font-size:13px;font-weight:700;line-height:13px;color:#444;width:8px;text-align:center}
.zt{width:65px;height:1px;background:#999;position:relative}
.zk{position:absolute;left:30px;top:-3px;width:3px;height:7px;border:1px solid #777;background:#f6f5f4}
.s-j{flex:1;border:0;text-align:center}
```
